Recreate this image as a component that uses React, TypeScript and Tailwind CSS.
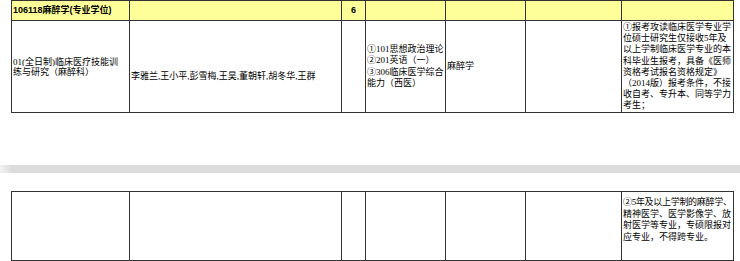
import React from 'react';

const font = "font-['Liberation_Serif','Noto_Sans_CJK_SC',serif]";
const sans = "font-['Liberation_Sans','Noto_Sans_CJK_SC',sans-serif]";
const grid = 'ml-[11px] w-[723px] grid grid-cols-[118px_212px_24px_80px_80px_96px_112px] border-l border-t border-[#333]';
const cell = 'border-r border-b border-[#333] whitespace-nowrap overflow-hidden';

export default function App() {
  return (
    <div className={`w-[740px] h-[261px] bg-white overflow-hidden text-[9px] text-black ${font}`}>
      {/* first table: header + program row */}
      <div className={`${grid} grid-rows-[20px_92px]`}>
        <div className={`${cell} bg-[#ffff99] flex items-center pl-[1px] font-bold ${sans}`}>
          106118麻醉学(专业学位)
        </div>
        <div className={`${cell} bg-[#ffff99]`} />
        <div className={`${cell} bg-[#ffff99] flex items-center justify-center font-bold ${sans}`}>6</div>
        <div className={`${cell} bg-[#ffff99]`} />
        <div className={`${cell} bg-[#ffff99]`} />
        <div className={`${cell} bg-[#ffff99]`} />
        <div className={`${cell} bg-[#ffff99]`} />

        <div className={`${cell} flex flex-col justify-center pl-[1px] leading-[10px]`}>
          <span>01(全日制)临床医疗技能训</span>
          <span>练与研究（麻醉科）</span>
        </div>
        <div className={`${cell} flex items-center pl-[1px] pt-[21px]`}>
          李雅兰,王小平,彭雪梅,王昊,董朝轩,胡冬华,王群
        </div>
        <div className={cell} />
        <div className={`${cell} flex flex-col justify-center pl-[1px] leading-[11.3px]`}>
          <span>①101思想政治理论</span>
          <span>②201英语（一）</span>
          <span>③306临床医学综合</span>
          <span>能力（西医）</span>
        </div>
        <div className={`${cell} flex items-center pl-[1px]`}>麻醉学</div>
        <div className={cell} />
        <div className={`${cell} flex flex-col pl-[1px] pt-[1px] leading-[11.2px]`}>
          <span>①报考攻读临床医学专业学</span>
          <span>位硕士研究生仅接收5年及</span>
          <span>以上学制临床医学专业的本</span>
          <span>科毕业生报考，具备《医师</span>
          <span>资格考试报名资格规定》</span>
          <span>（2014版）报考条件，不接</span>
          <span>收自考、专升本、同等学力</span>
          <span>考生；</span>
        </div>
      </div>

      {/* page break band */}
      <div className="mt-[52px] h-[8px] w-full bg-[linear-gradient(to_right,#f2f2f2,#dcdcdd_12px)]" />

      {/* second table: continued row */}
      <div className={`${grid} mt-[18px] grid-rows-[69px]`}>
        <div className={cell} />
        <div className={cell} />
        <div className={cell} />
        <div className={cell} />
        <div className={cell} />
        <div className={cell} />
        <div className={`${cell} flex flex-col pl-[1px] pt-[5px] leading-[11.5px]`}>
          <span className="tracking-[-0.3px]">②5年及以上学制的麻醉学、</span>
          <span>精神医学、医学影像学、放</span>
          <span>射医学等专业，专硕限报对</span>
          <span>应专业，不得跨专业。</span>
        </div>
      </div>
    </div>
  );
}
